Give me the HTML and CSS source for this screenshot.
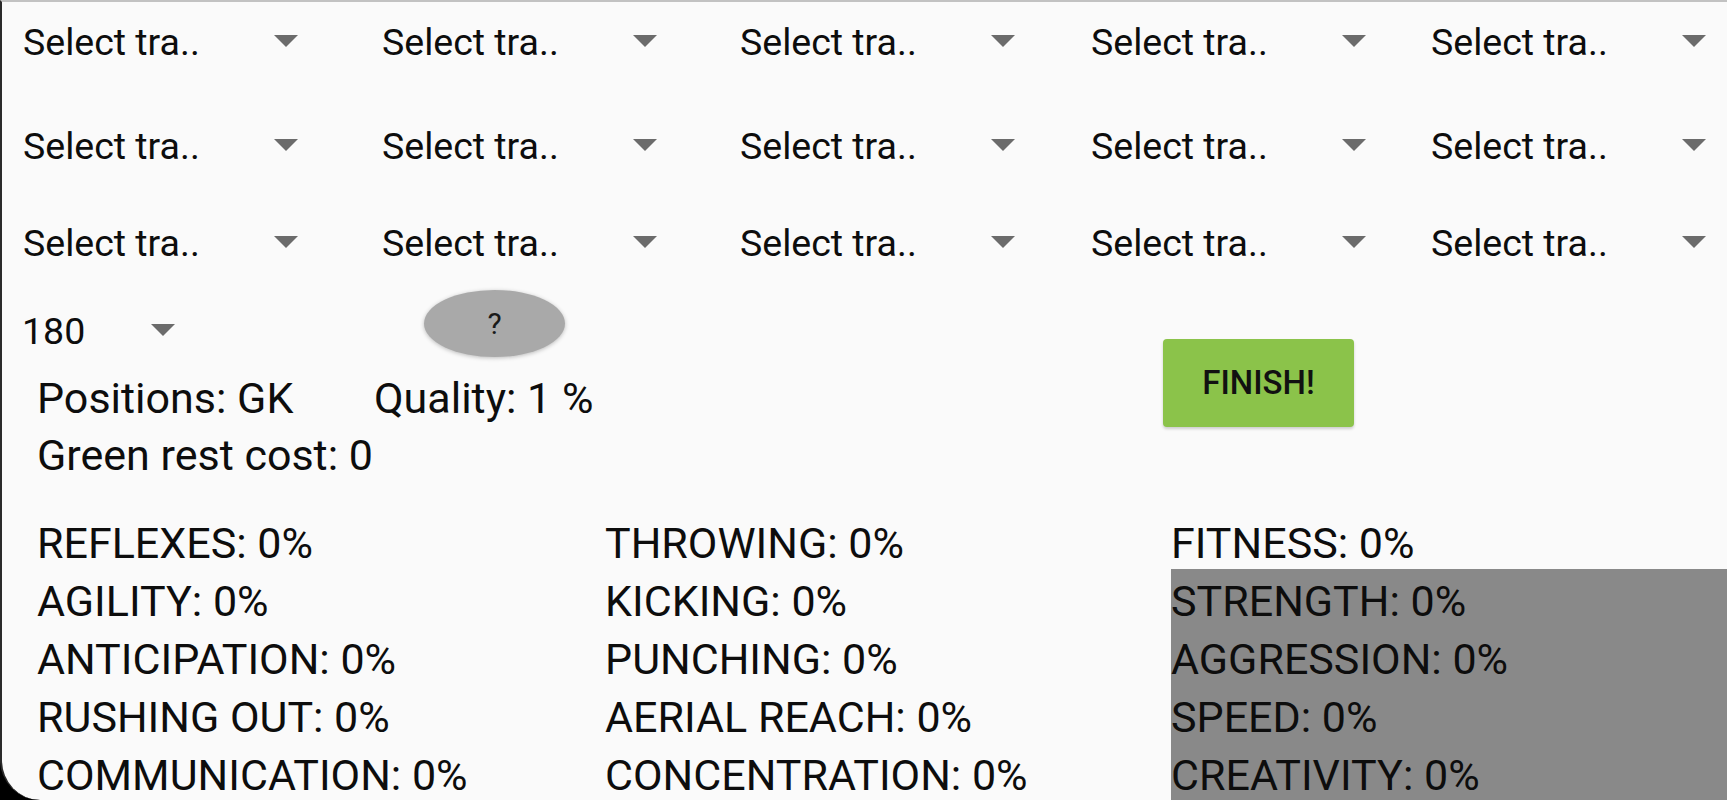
FILE: index.html
```html
<!DOCTYPE html>
<html>
<head>
<meta charset="utf-8">
<link rel="stylesheet" href="styles.css">
</head>
<body>
<div class="screen">
  <div class="spinners">
    <div class="srow r1">
      <div class="cell c1"><div class="spinner"><span class="sp-text">Select tra..</span><svg class="arrow" viewBox="0 0 24 12"><polygon points="0,0 24,0 12,12"/></svg></div></div>
      <div class="cell c2"><div class="spinner"><span class="sp-text">Select tra..</span><svg class="arrow" viewBox="0 0 24 12"><polygon points="0,0 24,0 12,12"/></svg></div></div>
      <div class="cell c3"><div class="spinner"><span class="sp-text">Select tra..</span><svg class="arrow" viewBox="0 0 24 12"><polygon points="0,0 24,0 12,12"/></svg></div></div>
      <div class="cell c4"><div class="spinner"><span class="sp-text">Select tra..</span><svg class="arrow" viewBox="0 0 24 12"><polygon points="0,0 24,0 12,12"/></svg></div></div>
      <div class="cell c5"><div class="spinner"><span class="sp-text">Select tra..</span><svg class="arrow" viewBox="0 0 24 12"><polygon points="0,0 24,0 12,12"/></svg></div></div>
    </div>
    <div class="srow r2">
      <div class="cell c1"><div class="spinner"><span class="sp-text">Select tra..</span><svg class="arrow" viewBox="0 0 24 12"><polygon points="0,0 24,0 12,12"/></svg></div></div>
      <div class="cell c2"><div class="spinner"><span class="sp-text">Select tra..</span><svg class="arrow" viewBox="0 0 24 12"><polygon points="0,0 24,0 12,12"/></svg></div></div>
      <div class="cell c3"><div class="spinner"><span class="sp-text">Select tra..</span><svg class="arrow" viewBox="0 0 24 12"><polygon points="0,0 24,0 12,12"/></svg></div></div>
      <div class="cell c4"><div class="spinner"><span class="sp-text">Select tra..</span><svg class="arrow" viewBox="0 0 24 12"><polygon points="0,0 24,0 12,12"/></svg></div></div>
      <div class="cell c5"><div class="spinner"><span class="sp-text">Select tra..</span><svg class="arrow" viewBox="0 0 24 12"><polygon points="0,0 24,0 12,12"/></svg></div></div>
    </div>
    <div class="srow r3">
      <div class="cell c1"><div class="spinner"><span class="sp-text">Select tra..</span><svg class="arrow" viewBox="0 0 24 12"><polygon points="0,0 24,0 12,12"/></svg></div></div>
      <div class="cell c2"><div class="spinner"><span class="sp-text">Select tra..</span><svg class="arrow" viewBox="0 0 24 12"><polygon points="0,0 24,0 12,12"/></svg></div></div>
      <div class="cell c3"><div class="spinner"><span class="sp-text">Select tra..</span><svg class="arrow" viewBox="0 0 24 12"><polygon points="0,0 24,0 12,12"/></svg></div></div>
      <div class="cell c4"><div class="spinner"><span class="sp-text">Select tra..</span><svg class="arrow" viewBox="0 0 24 12"><polygon points="0,0 24,0 12,12"/></svg></div></div>
      <div class="cell c5"><div class="spinner"><span class="sp-text">Select tra..</span><svg class="arrow" viewBox="0 0 24 12"><polygon points="0,0 24,0 12,12"/></svg></div></div>
    </div>
  </div>

  <div class="middle">
    <div class="left">
      <div class="row4">
        <div class="spinner"><span class="sp-text short">180</span><svg class="arrow" viewBox="0 0 24 12"><polygon points="0,0 24,0 12,12"/></svg></div>
        <button class="help">?</button>
      </div>
      <div class="info">
        <div class="info-line"><span class="pos">Positions: GK</span><span>Quality: 1 %</span></div>
        <div class="info-line">Green rest cost: 0</div>
      </div>
    </div>
    <button class="finish">FINISH!</button>
  </div>

  <div class="attrs">
    <div class="col">
      <div class="attr">REFLEXES: 0%</div>
      <div class="attr">AGILITY: 0%</div>
      <div class="attr">ANTICIPATION: 0%</div>
      <div class="attr">RUSHING OUT: 0%</div>
      <div class="attr">COMMUNICATION: 0%</div>
    </div>
    <div class="col">
      <div class="attr">THROWING: 0%</div>
      <div class="attr">KICKING: 0%</div>
      <div class="attr">PUNCHING: 0%</div>
      <div class="attr">AERIAL REACH: 0%</div>
      <div class="attr">CONCENTRATION: 0%</div>
    </div>
    <div class="col">
      <div class="attr first">FITNESS: 0%</div>
      <div class="panel">
        <div class="attr">STRENGTH: 0%</div>
        <div class="attr">AGGRESSION: 0%</div>
        <div class="attr">SPEED: 0%</div>
        <div class="attr">CREATIVITY: 0%</div>
      </div>
    </div>
  </div>
</div>
</body>
</html>
```

FILE: styles.css
```css
* { box-sizing: border-box; }
html, body { margin: 0; padding: 0; background: #000; }

.screen {
  width: 1727px;
  height: 800px;
  background: #fafafa;
  border-top: 2px solid #c2c2c2;
  border-left: 2px solid #2a2a2a;
  border-bottom-left-radius: 40px;
  overflow: hidden;
  font-family: Roboto, "Noto Sans", sans-serif;
  color: #0d0d0d;
}

/* spinner rows */
.srow {
  display: flex;
  align-items: center;
  height: 60px;
  padding-left: 19px;
}
.r1 { margin-top: 9px; }
.r2 { margin-top: 43.7px; }
.r3 { margin-top: 37.6px; }

.cell { flex: none; }
.c1 { width: 359px; }
.c2 { width: 358px; }
.c3 { width: 351px; }
.c4 { width: 340px; }
.c5 { flex: 1; }

.spinner {
  display: flex;
  align-items: center;
}
.sp-text {
  flex: none;
  width: 253px;
  padding-left: 2px;
  padding-top: 2px;
  font-size: 37.5px;
  line-height: 44px;
  white-space: nowrap;
}
.sp-text.short { width: 130px; padding-left: 1px; }
.arrow {
  flex: none;
  width: 24px;
  height: 12px;
  fill: #6b6b6b;
}

/* middle section */
.middle {
  display: flex;
  margin-top: 17.7px;
}
.left {
  flex: none;
  width: 1161px;
}
.row4 {
  display: flex;
  align-items: center;
  height: 80px;
  padding-left: 19px;
}
.help {
  align-self: flex-start;
  margin-left: 249px;
  width: 141px;
  height: 67px;
  border: none;
  border-radius: 50%;
  background: #a9a9a9;
  box-shadow: 0 1px 4px rgba(0,0,0,0.25);
  font-family: Roboto, "Noto Sans", sans-serif;
  font-size: 30px;
  color: #1a1a1a;
  padding: 0;
}
.info {
  padding-left: 35px;
}
.info-line {
  height: 57px;
  line-height: 57px;
  font-size: 43px;
  white-space: nowrap;
}
.pos {
  display: inline-block;
  width: 337px;
}
.finish {
  flex: none;
  margin-top: 49px;
  width: 191px;
  height: 88px;
  border: none;
  border-radius: 4px;
  background: #8bc34a;
  box-shadow: 0 2px 3px rgba(0,0,0,0.18);
  font-family: Roboto, "Noto Sans", sans-serif;
  font-size: 33px;
  font-weight: 500;
  color: #111;
  padding: 0;
}

/* attributes */
.attrs {
  display: grid;
  grid-template-columns: 568px 566px 1fr;
  margin-top: 30.3px;
  padding-left: 35px;
  font-size: 43px;
  line-height: 58px;
  white-space: nowrap;
}
.attr { height: 58px; }
.attr.first { height: 54.7px; }
.panel {
  background: #898989;
  padding-top: 3.3px;
  height: 300px;
}
```
